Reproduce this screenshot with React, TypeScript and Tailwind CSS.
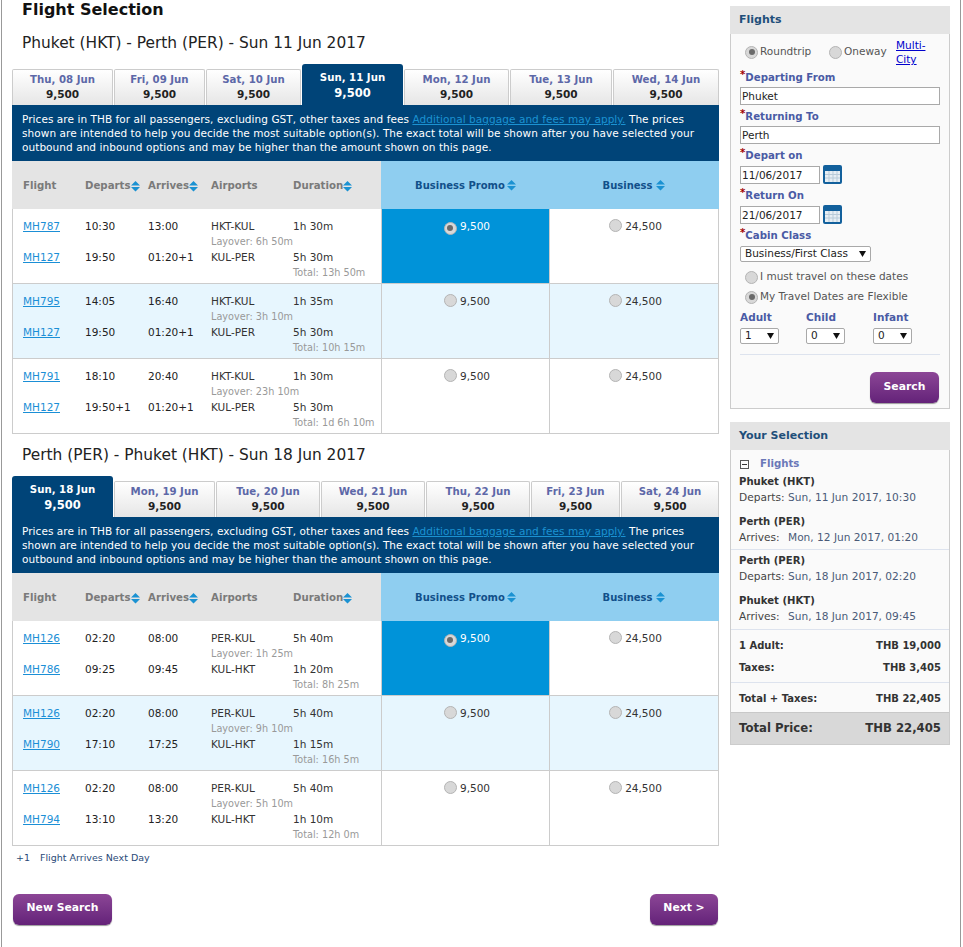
import React from "react";

type Leg = { no: string; dep: string; arr: string; route: string; dur: string; sub: string };
type Row = { a: Leg; b: Leg };

const Sort = ({ className = "" }: { className?: string }) => (
  <svg width="9" height="11" viewBox="0 0 9 11" className={`inline-block ${className}`}>
    <path d="M4.5 0 L9 4.5 H0 Z M0 6 H9 L4.5 10.5 Z" fill="#1b92d2" />
  </svg>
);

const Radio = ({ on = false }: { on?: boolean }) => (
  <span className="inline-flex h-[13px] w-[13px] shrink-0 items-center justify-center rounded-full border border-[#b4b4b4] bg-[#d8d8d8]">
    {on && <span className="h-[6px] w-[6px] rounded-full bg-[#6a6a6a]" />}
  </span>
);

const Cal = () => (
  <svg width="19" height="19" viewBox="0 0 19 19" className="shrink-0">
    <rect x="0" y="0" width="19" height="19" rx="2" fill="#12609c" />
    <rect x="2" y="6" width="15" height="11" fill="#e6eef4" />
    <path d="M2 9.5H17M2 13H17M6 6V17M10 6V17M14 6V17" stroke="#b8cbd9" strokeWidth="1" />
  </svg>
);

const Tabs = ({ items, widths, active }: { items: string[]; widths: string[]; active: number }) => (
  <div className="flex h-[41px] items-end gap-[1px]">
    {items.map((t, i) =>
      i === active ? (
        <div key={t} className={`${widths[i]} flex h-[41px] flex-col items-center rounded-t-[3px] bg-[#004478] pt-[7px] text-white`}>
          <div className="text-[10.2px] leading-[14px] font-bold">{t}</div>
          <div className="text-[11.5px] leading-[16px] font-bold">9,500</div>
        </div>
      ) : (
        <div key={t} className={`${widths[i]} flex h-[36px] flex-col items-center rounded-t-[2px] border border-b-0 border-[#cccccc] bg-gradient-to-b from-white to-[#e6e6e6] pt-[3px]`}>
          <div className="text-[10.2px] leading-[14px] font-bold text-[#5d68a8]">{t}</div>
          <div className="text-[10.5px] leading-[14px] font-bold text-[#222222]">9,500</div>
        </div>
      )
    )}
  </div>
);

const Info = () => (
  <div className="h-[56px] bg-[#004478] px-[10px] pt-[7px] text-[10.5px] leading-[14px] font-medium tracking-[0.06px] text-white">
    Prices are in THB for all passengers, excluding GST, other taxes and fees <span className="text-[#1b92d2] underline">Additional baggage and fees may apply.</span> The prices shown are intended to help you decide the most suitable option(s). The exact total will be shown after you have selected your outbound and inbound options and may be higher than the amount shown on this page.
  </div>
);

const cols = "grid grid-cols-[72px_63px_63px_82px_88px]";

const Head = () => (
  <div className="flex h-[48px]">
    <div className="grid w-[369px] grid-cols-[73px_63px_63px_82px_88px] items-center bg-[#e4e4e4] pt-[2px] text-[10.2px] font-bold text-[#7a7a7a]">
      <div className="pl-[11px]">Flight</div>
      <div>Departs<Sort /></div>
      <div>Arrives<Sort /></div>
      <div>Airports</div>
      <div>Duration<Sort /></div>
    </div>
    <div className="flex w-[168px] items-center justify-center gap-[2px] bg-[#8fcef0] pl-[1px] text-[10px] font-bold text-[#12508a]">Business Promo <Sort /></div>
    <div className="flex flex-1 items-center justify-center gap-[4px] bg-[#8fcef0] text-[10px] font-bold text-[#12508a]">Business <Sort /></div>
  </div>
);

const LegRows = ({ l, sub }: { l: Leg; sub: "left" | "right" }) => (
  <>
    <div className={`${cols} h-[16px] items-center text-[10.5px] leading-[16px]`}>
      <a className="pl-[10px] text-[#1b8fd6] underline">{l.no}</a>
      <div className="font-medium text-[#222222]">{l.dep}</div>
      <div className="font-medium text-[#222222]">{l.arr}</div>
      <div className="text-[#333333]">{l.route}</div>
      <div className="text-[#333333]">{l.dur}</div>
    </div>
    <div className={`${cols} h-[15px] items-center text-[9.7px] leading-[15px] text-[#999999]`}>
      <div className="col-span-3" />
      <div className={`col-span-2 whitespace-nowrap ${sub === "right" ? "pl-[82px]" : ""}`}>{l.sub}</div>
    </div>
  </>
);

const Price = ({ v, selected }: { v: string; selected?: boolean }) => (
  <div className={`flex items-start justify-center gap-[3px] pt-[9px] pl-[3px] text-[10.5px] leading-[16px] font-medium ${selected ? "bg-[#0093d9] text-white" : "text-[#333333]"}`}>
    <span className="mt-[1px]"><Radio on={selected} /></span>
    {v}
  </div>
);

const Table = ({ rows }: { rows: Row[] }) => (
  <div className="border-x border-b border-[#cccccc]">
    {rows.map((r, i) => (
      <div key={i} className={`flex ${i > 0 ? "h-[75px] border-t border-[#cccccc]" : "h-[74px]"} ${i === 1 ? "bg-[#e7f6fe]" : "bg-white"}`}>
        <div className="w-[369px] border-r border-[#cccccc] pt-[9px]">
          <LegRows l={r.a} sub="left" />
          <LegRows l={r.b} sub="right" />
        </div>
        <div className="grid flex-1 grid-cols-[168px_1fr]">
          <div className="grid border-r border-[#cccccc]"><Price v="9,500" selected={i === 0} /></div>
          <Price v="24,500" />
        </div>
      </div>
    ))}
  </div>
);

const leg = (no: string, dep: string, arr: string, route: string, dur: string, sub: string): Leg => ({ no, dep, arr, route, dur, sub });

const out: Row[] = [
  { a: leg("MH787", "10:30", "13:00", "HKT-KUL", "1h 30m", "Layover: 6h 50m"), b: leg("MH127", "19:50", "01:20+1", "KUL-PER", "5h 30m", "Total: 13h 50m") },
  { a: leg("MH795", "14:05", "16:40", "HKT-KUL", "1h 35m", "Layover: 3h 10m"), b: leg("MH127", "19:50", "01:20+1", "KUL-PER", "5h 30m", "Total: 10h 15m") },
  { a: leg("MH791", "18:10", "20:40", "HKT-KUL", "1h 30m", "Layover: 23h 10m"), b: leg("MH127", "19:50+1", "01:20+1", "KUL-PER", "5h 30m", "Total: 1d 6h 10m") },
];
const back: Row[] = [
  { a: leg("MH126", "02:20", "08:00", "PER-KUL", "5h 40m", "Layover: 1h 25m"), b: leg("MH786", "09:25", "09:45", "KUL-HKT", "1h 20m", "Total: 8h 25m") },
  { a: leg("MH126", "02:20", "08:00", "PER-KUL", "5h 40m", "Layover: 9h 10m"), b: leg("MH790", "17:10", "17:25", "KUL-HKT", "1h 15m", "Total: 16h 5m") },
  { a: leg("MH126", "02:20", "08:00", "PER-KUL", "5h 40m", "Layover: 5h 10m"), b: leg("MH794", "13:10", "13:20", "KUL-HKT", "1h 10m", "Total: 12h 0m") },
];

const Btn = ({ children, className = "" }: { children: React.ReactNode; className?: string }) => (
  <div className={`flex h-[31px] items-center justify-center rounded-[6px] bg-gradient-to-b from-[#8c4696] to-[#642279] text-[10.8px] font-bold text-white shadow-[0_1px_1px_#999999] ${className}`}>{children}</div>
);

const Label = ({ children }: { children: React.ReactNode }) => (
  <div className="flex h-[16px] items-start text-[10.2px] leading-[20px] font-bold text-[#4a5ba5]">
    <span className="-mt-[3px] text-[#a00000]">*</span>{children}
  </div>
);

const Field = ({ v, w }: { v: string; w: string }) => (
  <div className={`${w} h-[18px] border border-[#a9a9a9] bg-white pl-[1px] text-[10.5px] leading-[16px] text-[#222222]`}>{v}</div>
);

const Sel = ({ v, w }: { v: string; w: string }) => (
  <div className={`${w} flex h-[16px] items-center justify-between rounded-[2px] border border-[#a9a9a9] bg-white px-[4px] text-[10.5px] font-normal text-[#222222]`}>
    <span>{v}</span>
    <svg width="7" height="6" viewBox="0 0 7 6"><path d="M0 0H7L3.5 6Z" fill="#111111" /></svg>
  </div>
);

const SelRow = ({ city, k, v }: { city: string; k: string; v: string }) => (
  <div className="px-[8px]">
    <div className="h-[17px] text-[10.1px] leading-[18px] font-bold text-[#333333]">{city}</div>
    <div className="flex h-[15px] items-center text-[10.6px] leading-[15px] text-[#4a5a78]">
      <span className="w-[49px] text-[#444444]">{k}</span>
      <span>{v}</span>
    </div>
  </div>
);

const Money = ({ k, v, h }: { k: string; v: string; h: string }) => (
  <div className={`flex ${h} items-center justify-between px-[8px] text-[10px] font-bold text-[#333333]`}>
    <span>{k}</span><span>{v}</span>
  </div>
);

export default function App() {
  return (
    <div className="relative h-[947px] w-[963px] overflow-hidden bg-white [font-family:'DejaVu_Sans',sans-serif]">
      <div className="mx-[1px] flex h-full w-[960px] gap-[11px] border-x border-[#999999] pl-[10px]">
        <div className="w-[707px]">
          <h1 className="h-[20px] pl-[10px] text-[16px] leading-[20px] font-bold text-[#111111]">Flight Selection</h1>
          <h2 className="mt-[11px] h-[24px] pl-[10px] text-[15.4px] leading-[24px] text-[#222222]">Phuket (HKT) - Perth (PER) - Sun 11 Jun 2017</h2>
          <div className="mt-[9px]">
            <Tabs active={3} items={["Thu, 08 Jun", "Fri, 09 Jun", "Sat, 10 Jun", "Sun, 11 Jun", "Mon, 12 Jun", "Tue, 13 Jun", "Wed, 14 Jun"]} widths={["w-[101px]", "w-[91px]", "w-[95px]", "w-[101px]", "w-[105px]", "w-[102px]", "w-[106px]"]} />
          </div>
          <Info />
          <Head />
          <Table rows={out} />
          <h2 className="mt-[8px] h-[26px] pl-[10px] text-[15.4px] leading-[26px] text-[#222222]">Perth (PER) - Phuket (HKT) - Sun 18 Jun 2017</h2>
          <div className="mt-[8px]">
            <Tabs active={0} items={["Sun, 18 Jun", "Mon, 19 Jun", "Tue, 20 Jun", "Wed, 21 Jun", "Thu, 22 Jun", "Fri, 23 Jun", "Sat, 24 Jun"]} widths={["w-[101px]", "w-[101px]", "w-[104px]", "w-[104px]", "w-[104px]", "w-[89px]", "w-[98px]"]} />
          </div>
          <Info />
          <Head />
          <Table rows={back} />
          <div className="mt-[5px] flex h-[14px] items-center pl-[4px] text-[9.5px] leading-[14px] text-[#2a4a78]">
            <span className="w-[24px]">+1</span>Flight Arrives Next Day
          </div>
          <div className="mt-[29px] flex justify-between pl-[1px]">
            <Btn className="w-[99px] pb-[3px]">New Search</Btn>
            <Btn className="mr-[1px] w-[68px] pb-[3px]">Next &gt;</Btn>
          </div>
        </div>

        <div className="w-[220px] pt-[6px]">
          <section className="h-[403px] border border-[#cccccc] bg-[#fafafa]">
            <div className="-mx-px -mt-px h-[28px] bg-[#e4e4e4] pl-[9px] text-[11px] leading-[28px] font-bold text-[#1f4f7a]">Flights</div>
            <div className="px-[9px]">
              <div className="flex h-[34px] items-center pt-[2px] pl-[5px] text-[10.5px] text-[#555555]">
                <Radio on /><span className="ml-[2px] w-[69px]">Roundtrip</span>
                <Radio /><span className="ml-[2px] w-[52px]">Oneway</span>
                <a className="w-[36px] text-[10.5px] leading-[14px] text-[#0000cc] underline">Multi-City</a>
              </div>
              <Label>Departing From</Label>
              <div className="mt-[3px]"><Field v="Phuket" w="w-[200px]" /></div>
              <div className="mt-[2px]"><Label>Returning To</Label></div>
              <div className="mt-[3px]"><Field v="Perth" w="w-[200px]" /></div>
              <div className="mt-[2px]"><Label>Depart on</Label></div>
              <div className="mt-[3px] flex items-center gap-[3px]"><Field v="11/06/2017" w="w-[80px]" /><Cal /></div>
              <div className="mt-[2px]"><Label>Return On</Label></div>
              <div className="mt-[3px] flex items-center gap-[3px]"><Field v="21/06/2017" w="w-[80px]" /><Cal /></div>
              <div className="mt-[2px]"><Label>Cabin Class</Label></div>
              <div className="mt-[4px]"><Sel v="Business/First Class" w="w-[131px]" /></div>
              <div className="mt-[5px] flex h-[20px] items-center pl-[5px] text-[10.5px] text-[#555555]"><Radio /><span className="ml-[2px]">I must travel on these dates</span></div>
              <div className="flex h-[20px] items-center pl-[5px] text-[10.5px] text-[#555555]"><Radio on /><span className="ml-[2px]">My Travel Dates are Flexible</span></div>
              <div className="mt-[3px] grid grid-cols-[66px_67px_1fr] text-[10.5px] font-bold text-[#4a5ba5]">
                <div><div className="h-[16px]">Adult</div><div className="mt-[2px]"><Sel v="1" w="w-[39px]" /></div></div>
                <div><div className="h-[16px]">Child</div><div className="mt-[2px]"><Sel v="0" w="w-[39px]" /></div></div>
                <div><div className="h-[16px]">Infant</div><div className="mt-[2px]"><Sel v="0" w="w-[39px]" /></div></div>
              </div>
              <div className="mt-[10px] border-t border-[#dde3ee]" />
              <div className="mt-[17px] flex justify-end pr-[1px]"><Btn className="w-[69px] pb-[1px]">Search</Btn></div>
            </div>
          </section>

          <section className="mt-[13px] h-[323px] border border-[#cccccc] bg-[#fafafa]">
            <div className="-mx-px -mt-px h-[28px] bg-[#e4e4e4] pl-[9px] text-[11px] leading-[28px] font-bold text-[#1f4f7a]">Your Selection</div>
            <div className="flex h-[22px] items-center pt-[6px] pl-[9px] text-[10.2px] font-bold text-[#6b78b8]">
              <span className="mr-[11px] flex h-[9px] w-[9px] items-center justify-center border border-[#555555]"><span className="h-px w-[5px] bg-[#333333]" /></span>Flights
            </div>
            <div className="h-[78px] border-b border-[#dde3ee] pt-[1px]">
              <SelRow city="Phuket (HKT)" k="Departs:" v="Sun, 11 Jun 2017, 10:30" />
              <div className="mt-[8px]"><SelRow city="Perth (PER)" k="Arrives:" v="Mon, 12 Jun 2017, 01:20" /></div>
            </div>
            <div className="h-[80px] border-b border-[#dde3ee] pt-[2px]">
              <SelRow city="Perth (PER)" k="Departs:" v="Sun, 18 Jun 2017, 02:20" />
              <div className="mt-[8px]"><SelRow city="Phuket (HKT)" k="Arrives:" v="Sun, 18 Jun 2017, 09:45" /></div>
            </div>
            <div className="h-[53px] border-b border-[#dde3ee] pt-[4px]">
              <Money k="1 Adult:" v="THB 19,000" h="h-[22px]" />
              <Money k="Taxes:" v="THB 3,405" h="h-[22px]" />
            </div>
            <Money k="Total + Taxes:" v="THB 22,405" h="h-[29px] pt-[1px]" />
            <div className="flex h-[32px] items-center justify-between border-t border-[#c8c8c8] bg-[#d8d8d8] px-[8px] pt-[1px] text-[11.7px] font-bold text-[#333333]">
              <span>Total Price:</span><span>THB 22,405</span>
            </div>
          </section>
        </div>
      </div>
    </div>
  );
}
